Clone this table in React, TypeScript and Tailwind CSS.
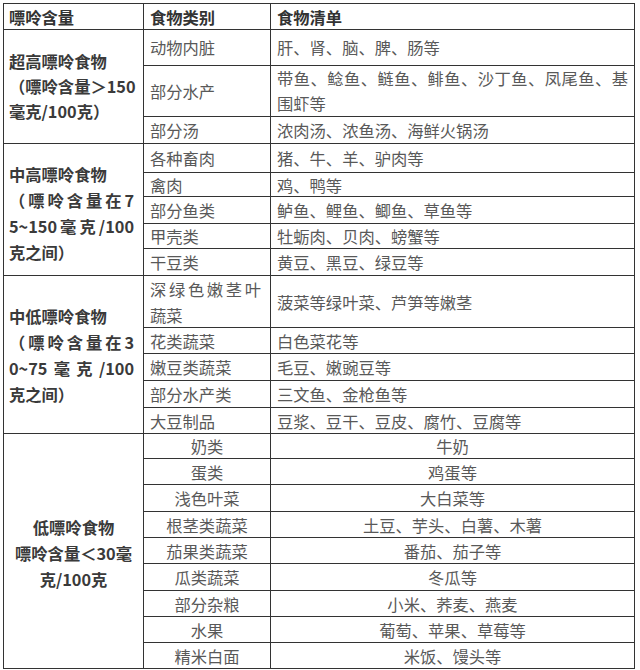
import React from "react";

type Line = { t: string; j?: boolean };
type Row = { cat: Line[]; items: Line[] };
type Group = { left: Line[]; leading: string; pt?: string; center?: boolean; rows: Row[] };

const L = (t: string, j = false): Line => ({ t, j });

const groups: Group[] = [
  {
    left: [L("超高嘌呤食物"), L("（嘌呤含量＞150"), L("毫克/100克）")],
    leading: "leading-[25px]",
    rows: [
      { cat: [L("动物内脏")], items: [L("肝、肾、脑、脾、肠等")] },
      {
        cat: [L("部分水产")],
        items: [L("带鱼、鲶鱼、鲢鱼、鲱鱼、沙丁鱼、凤尾鱼、基", true), L("围虾等")],
      },
      { cat: [L("部分汤")], items: [L("浓肉汤、浓鱼汤、海鲜火锅汤")] },
    ],
  },
  {
    left: [L("中高嘌呤食物"), L("（嘌呤含量在7", true), L("5~150毫克/100", true), L("克之间）")],
    leading: "leading-[26px]",
    pt: "pt-[6px]",
    rows: [
      { cat: [L("各种畜肉")], items: [L("猪、牛、羊、驴肉等")] },
      { cat: [L("禽肉")], items: [L("鸡、鸭等")] },
      { cat: [L("部分鱼类")], items: [L("鲈鱼、鲤鱼、鲫鱼、草鱼等")] },
      { cat: [L("甲壳类")], items: [L("牡蛎肉、贝肉、螃蟹等")] },
      { cat: [L("干豆类")], items: [L("黄豆、黑豆、绿豆等")] },
    ],
  },
  {
    left: [L("中低嘌呤食物"), L("（嘌呤含量在3", true), L("0~75毫克/100", true), L("克之间）")],
    leading: "leading-[26px]",
    rows: [
      { cat: [L("深绿色嫩茎叶", true), L("蔬菜")], items: [L("菠菜等绿叶菜、芦笋等嫩茎")] },
      { cat: [L("花类蔬菜")], items: [L("白色菜花等")] },
      { cat: [L("嫩豆类蔬菜")], items: [L("毛豆、嫩豌豆等")] },
      { cat: [L("部分水产类")], items: [L("三文鱼、金枪鱼等")] },
      { cat: [L("大豆制品")], items: [L("豆浆、豆干、豆皮、腐竹、豆腐等")] },
    ],
  },
  {
    left: [L("低嘌呤食物"), L("嘌呤含量＜30毫"), L("克/100克")],
    leading: "leading-[26px]",
    pt: "pt-[4px]",
    center: true,
    rows: [
      { cat: [L("奶类")], items: [L("牛奶")] },
      { cat: [L("蛋类")], items: [L("鸡蛋等")] },
      { cat: [L("浅色叶菜")], items: [L("大白菜等")] },
      { cat: [L("根茎类蔬菜")], items: [L("土豆、芋头、白薯、木薯")] },
      { cat: [L("茄果类蔬菜")], items: [L("番茄、茄子等")] },
      { cat: [L("瓜类蔬菜")], items: [L("冬瓜等")] },
      { cat: [L("部分杂粮")], items: [L("小米、荞麦、燕麦")] },
      { cat: [L("水果")], items: [L("葡萄、苹果、草莓等")] },
      { cat: [L("精米白面")], items: [L("米饭、馒头等")] },
    ],
  },
];

const spanClass: Record<number, string> = {
  3: "row-span-3",
  5: "row-span-5",
  9: "row-span-9",
};

function Lines({ lines }: { lines: Line[] }) {
  return (
    <div className="w-full">
      {lines.map((l, i) => (
        <div key={i} className={l.j ? "text-justify [text-align-last:justify] whitespace-nowrap" : "whitespace-nowrap"}>
          {l.t}
        </div>
      ))}
    </div>
  );
}

export default function App() {
  const cell = "border-r border-b border-[#333] flex items-center";
  return (
    <div className="w-[640px] h-[670px] bg-white pt-[3px] pl-[3px] font-['Noto_Sans_CJK_SC','Noto_Sans',sans-serif] text-[16.3px]">
      <div className="grid w-[632px] grid-cols-[140px_127px_364px] grid-rows-[26px_36px_51px_27px_29px_24px_27px_25px_27px_52px_26px_27px_27px_26px_25px_26px_27px_26px_26px_27px_26px_26px_26px] border-l border-t border-[#333]">
        <div className={`${cell} col-start-1 pl-[5px] font-bold text-[#333] leading-[24px]`}>嘌呤含量</div>
        <div className={`${cell} col-start-2 pl-[6px] font-bold text-[#333] leading-[24px]`}>食物类别</div>
        <div className={`${cell} col-start-3 pl-[6px] font-bold text-[#333] leading-[24px]`}>食物清单</div>
        {groups.map((g, gi) => (
          <React.Fragment key={gi}>
            <div
              className={`${cell} col-start-1 ${spanClass[g.rows.length]} ${g.leading} ${g.pt ?? ""} font-bold text-[#3a3a3a] ${
                g.center ? "text-center px-[4px]" : "pl-[5px] pr-[9px]"
              }`}
            >
              <Lines lines={g.left} />
            </div>
            {g.rows.map((r, ri) => (
              <React.Fragment key={ri}>
                <div
                  className={`${cell} col-start-2 text-[#595959] ${g.leading} ${
                    g.center ? "justify-center text-center" : "pl-[6px] pr-[9px]"
                  }`}
                >
                  <Lines lines={r.cat} />
                </div>
                <div
                  className={`${cell} col-start-3 text-[#595959] ${g.leading} ${
                    g.center ? "justify-center text-center" : "pl-[6px] pr-[6px]"
                  }`}
                >
                  <Lines lines={r.items} />
                </div>
              </React.Fragment>
            ))}
          </React.Fragment>
        ))}
      </div>
    </div>
  );
}
